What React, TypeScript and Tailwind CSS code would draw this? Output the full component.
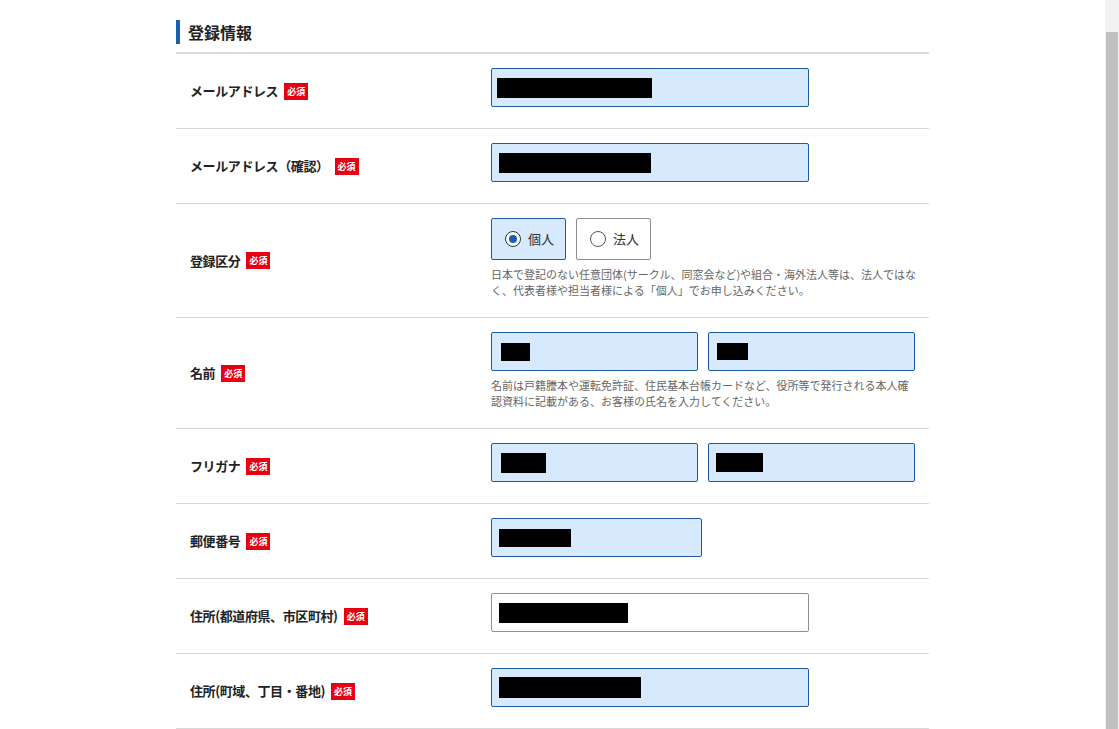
import React from "react";

const font = { fontFamily: '"Noto Sans CJK JP", "Noto Sans", sans-serif' };

function Badge() {
  return (
    <span className="ml-[6px] inline-flex h-[17px] w-[24px] shrink-0 items-center justify-center bg-[#e60012] text-[9px] font-bold leading-none tracking-normal text-white">
      必須
    </span>
  );
}

function Redact({ w, h = 20, ml = 6 }: { w: number; h?: number; ml?: number }) {
  return <span className="block bg-black" style={{ width: w, height: h, marginLeft: ml }} />;
}

function Field({ w, redact, rh = 20, ml = 6, white = false }: { w: number; redact: number; rh?: number; ml?: number; white?: boolean }) {
  return (
    <div
      className={
        "flex h-[39px] shrink-0 items-center rounded-[2px] border " +
        (white ? "border-[#8f8f8f] bg-white" : "border-[#1e5aa0] bg-[#d6e9fd]")
      }
      style={{ width: w }}
    >
      <Redact w={redact} h={rh} ml={ml} />
    </div>
  );
}

function Row({ label, h, children }: { label: React.ReactNode; h: number; children: React.ReactNode }) {
  return (
    <div className="flex border-b border-[#d9d9d9]" style={{ height: h }}>
      <div className="flex w-[315px] shrink-0 items-center pl-[14px] text-[13px] font-bold tracking-[-0.4px] text-[#222]">{label}</div>
      <div className="flex min-w-0 flex-1 flex-col pt-[14px]">{children}</div>
    </div>
  );
}

export default function App() {
  return (
    <div className="flex h-[729px] w-[1119px] overflow-hidden bg-white" style={font}>
      <div className="flex-1">
        <div className="mx-auto w-[753px]">
          <div className="flex items-center border-b-2 border-[#dcdcdc] pb-[8px] pt-[20px]">
            <div className="h-[24px] w-[4px] bg-[#1a5eb0]" />
            <h2 className="ml-[8px] text-[16px] font-bold leading-[24px] text-[#222]">登録情報</h2>
          </div>
          <Row h={75} label={<><span>メールアドレス</span><Badge /></>}>
            <Field w={318} redact={155} ml={5} />
          </Row>
          <Row h={75} label={<><span>メールアドレス（確認）</span><Badge /></>}>
            <Field w={318} redact={152} ml={7} />
          </Row>
          <Row h={114} label={<><span>登録区分</span><Badge /></>}>
            <div className="flex gap-[10px]">
              <div className="flex h-[42px] w-[75px] items-center rounded-[2px] border border-[#1e5aa0] bg-[#d6e9fd] pl-[13px]">
                <span className="flex h-[16px] w-[16px] items-center justify-center rounded-full border border-[#333] bg-white">
                  <span className="h-[8px] w-[8px] rounded-full bg-[#1a5eb0]" />
                </span>
                <span className="ml-[7px] text-[13px] text-[#333]">個人</span>
              </div>
              <div className="flex h-[42px] w-[75px] items-center rounded-[2px] border border-[#8f8f8f] bg-white pl-[13px]">
                <span className="h-[16px] w-[16px] rounded-full border border-[#555] bg-white" />
                <span className="ml-[7px] text-[13px] text-[#333]">法人</span>
              </div>
            </div>
            <p className="mt-[6px] w-[440px] text-[11px] leading-[16px] text-[#666]">
              日本で登記のない任意団体(サークル、同窓会など)や組合・海外法人等は、法人ではなく、代表者様や担当者様による「個人」でお申し込みください。
            </p>
          </Row>
          <Row h={111} label={<><span>名前</span><Badge /></>}>
            <div className="flex gap-[10px]">
              <Field w={207} redact={29} rh={18} ml={9} />
              <Field w={207} redact={31} rh={17} ml={8} />
            </div>
            <p className="mt-[6px] w-[424px] text-[11px] leading-[16px] text-[#666]">
              名前は戸籍謄本や運転免許証、住民基本台帳カードなど、役所等で発行される本人確認資料に記載がある、お客様の氏名を入力してください。
            </p>
          </Row>
          <Row h={75} label={<><span>フリガナ</span><Badge /></>}>
            <div className="flex gap-[10px]">
              <Field w={207} redact={45} ml={9} />
              <Field w={207} redact={47} rh={19} ml={7} />
            </div>
          </Row>
          <Row h={75} label={<><span>郵便番号</span><Badge /></>}>
            <Field w={211} redact={72} rh={18} ml={7} />
          </Row>
          <Row h={75} label={<><span>住所(都道府県、市区町村)</span><Badge /></>}>
            <Field w={318} redact={129} ml={7} white />
          </Row>
          <Row h={75} label={<><span>住所(町域、丁目・番地)</span><Badge /></>}>
            <Field w={318} redact={142} rh={21} ml={7} />
          </Row>
        </div>
      </div>
      <div className="flex h-full w-[14px] flex-col bg-[#f1f1f1]">
        <div className="h-[32px]" />
        <div className="mx-auto w-[12px] flex-1 bg-[#c1c1c1]" />
      </div>
    </div>
  );
}
